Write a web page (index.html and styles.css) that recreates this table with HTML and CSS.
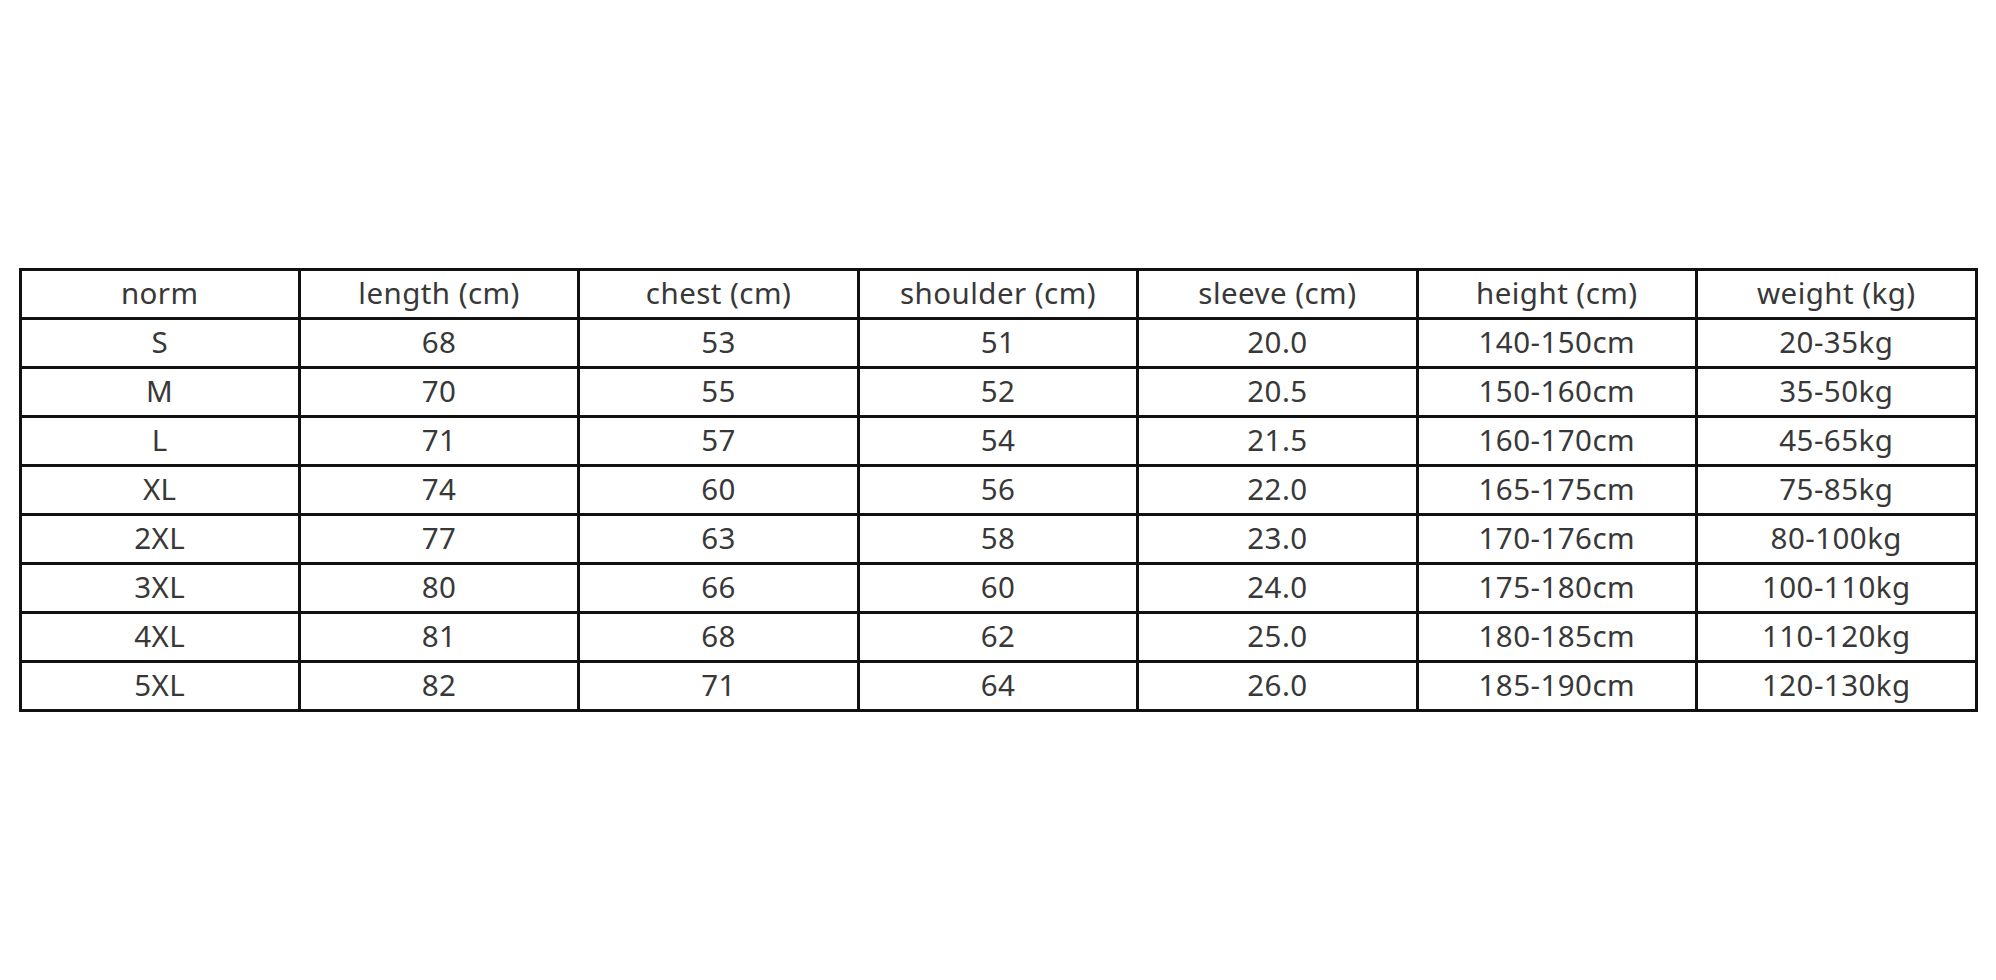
FILE: index.html
```html
<!DOCTYPE html>
<html>
<head>
<meta charset="utf-8">
<link rel="stylesheet" href="styles.css">
</head>
<body>
<div class="page">
<table class="size-table">
<tbody>
<tr><td>norm</td><td>length (cm)</td><td>chest (cm)</td><td>shoulder (cm)</td><td>sleeve (cm)</td><td>height (cm)</td><td>weight (kg)</td></tr>
<tr><td>S</td><td>68</td><td>53</td><td>51</td><td>20.0</td><td>140-150cm</td><td>20-35kg</td></tr>
<tr><td>M</td><td>70</td><td>55</td><td>52</td><td>20.5</td><td>150-160cm</td><td>35-50kg</td></tr>
<tr><td>L</td><td>71</td><td>57</td><td>54</td><td>21.5</td><td>160-170cm</td><td>45-65kg</td></tr>
<tr><td>XL</td><td>74</td><td>60</td><td>56</td><td>22.0</td><td>165-175cm</td><td>75-85kg</td></tr>
<tr><td>2XL</td><td>77</td><td>63</td><td>58</td><td>23.0</td><td>170-176cm</td><td>80-100kg</td></tr>
<tr><td>3XL</td><td>80</td><td>66</td><td>60</td><td>24.0</td><td>175-180cm</td><td>100-110kg</td></tr>
<tr><td>4XL</td><td>81</td><td>68</td><td>62</td><td>25.0</td><td>180-185cm</td><td>110-120kg</td></tr>
<tr><td>5XL</td><td>82</td><td>71</td><td>64</td><td>26.0</td><td>185-190cm</td><td>120-130kg</td></tr>
</tbody>
</table>
</div>
</body>
</html>
```
FILE: styles.css
```css
html, body {
  margin: 0;
  padding: 0;
  background: #ffffff;
}
.page {
  width: 1996px;
  height: 980px;
  display: flex;
  align-items: center;
  justify-content: center;
}
.size-table {
  border-collapse: collapse;
  table-layout: fixed;
  width: 1959px;
  font-family: "Noto Sans", "Open Sans", sans-serif;
  font-size: 29.5px;
  letter-spacing: 0.45px;
  color: #383838;
}
.size-table td {
  border: 3px solid #111111;
  height: 43px;
  padding: 0 0 3px 0;
  text-align: center;
  vertical-align: middle;
  line-height: 1;
}
```
